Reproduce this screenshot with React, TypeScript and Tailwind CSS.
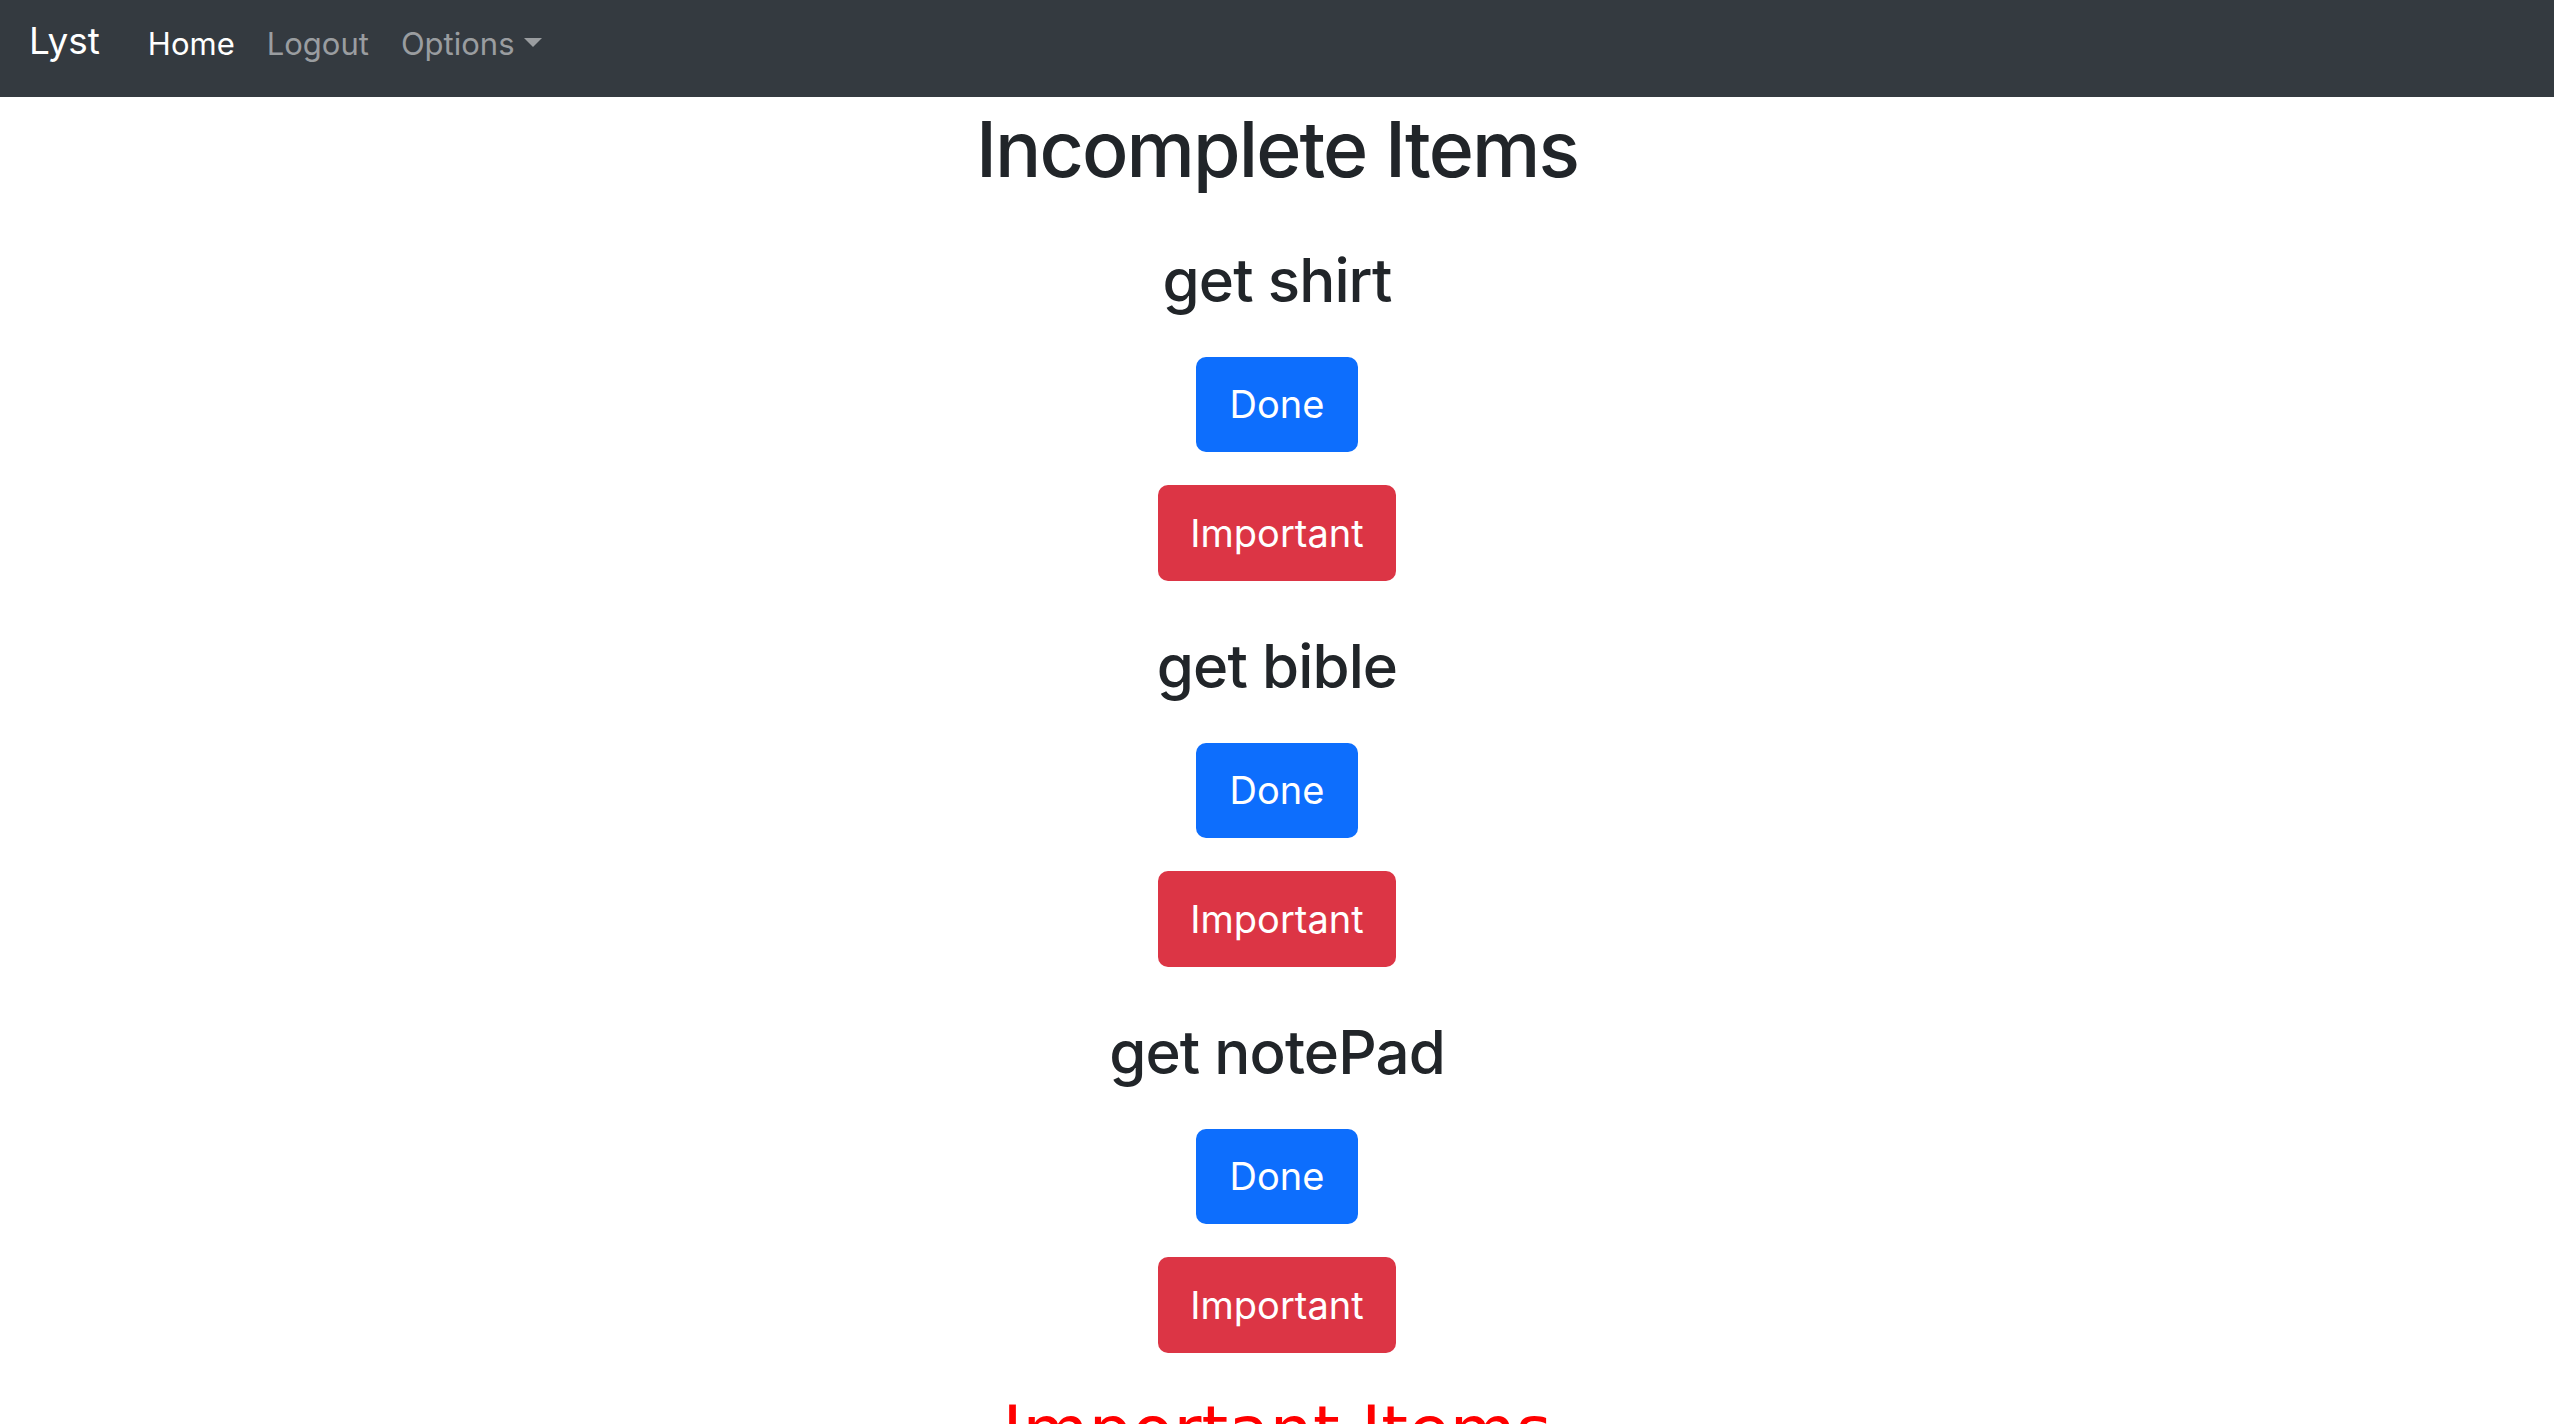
import React from "react";

const items = ["get shirt", "get bible", "get notePad"];

const Navbar: React.FC = () => {
  return (
    <nav className="flex h-[97px] items-center bg-[#343a40] pb-[10px] pl-[29px] font-['Inter',sans-serif]">
      {/* brand */}
      <a className="mb-[5px] mr-[32px] text-[37px] leading-[46px] text-white">Lyst</a>
      <ul className="flex items-center">
        <li>
          <a className="block px-[16px] text-[31px] leading-[36px] text-white">Home</a>
        </li>
        <li>
          <a className="block px-[16px] text-[31px] leading-[36px] text-[#9a9da0]">Logout</a>
        </li>
        <li>
          <a className="block px-[16px] text-[31px] leading-[36px] text-[#9a9da0]">
            Options
            <span className="ml-[9px] inline-block border-x-[9px] border-t-[9px] border-x-transparent border-t-[#9a9da0] align-[0.255em]" />
          </a>
        </li>
      </ul>
    </nav>
  );
};

const Item: React.FC<{ name: string }> = ({ name }) => {
  return (
    <div className="flex flex-col items-center pt-[49px]">
      <h2 className="text-[60px] font-medium leading-[72px] tracking-[-0.015em] text-[#212529]">{name}</h2>
      <button className="mt-[41px] flex h-[95px] items-center justify-center rounded-[10px] bg-[#0d6efd] px-[34px] text-[38px] text-white">
        Done
      </button>
      <button className="mt-[33px] flex h-[96px] items-center justify-center rounded-[10px] bg-[#dc3545] px-[32px] text-[38px] text-white">
        Important
      </button>
    </div>
  );
};

export default function App() {
  return (
    <div className="min-h-screen bg-white font-['Inter',sans-serif]">
      <Navbar />
      <main className="flex flex-col items-center">
        {/* incomplete */}
        <h1 className="mt-[6px] text-[77px] font-medium leading-[92px] tracking-tight text-[#212529]">Incomplete Items</h1>
        {items.map((item) => (
          <Item key={item} name={item} />
        ))}
        {/* important */}
        <h1 className="mt-[38px] font-['DejaVu_Sans',sans-serif] text-[68px] leading-[80px] text-[#ff0000]">
          Important Items
        </h1>
        <div className="h-[200px]" />
      </main>
    </div>
  );
}
